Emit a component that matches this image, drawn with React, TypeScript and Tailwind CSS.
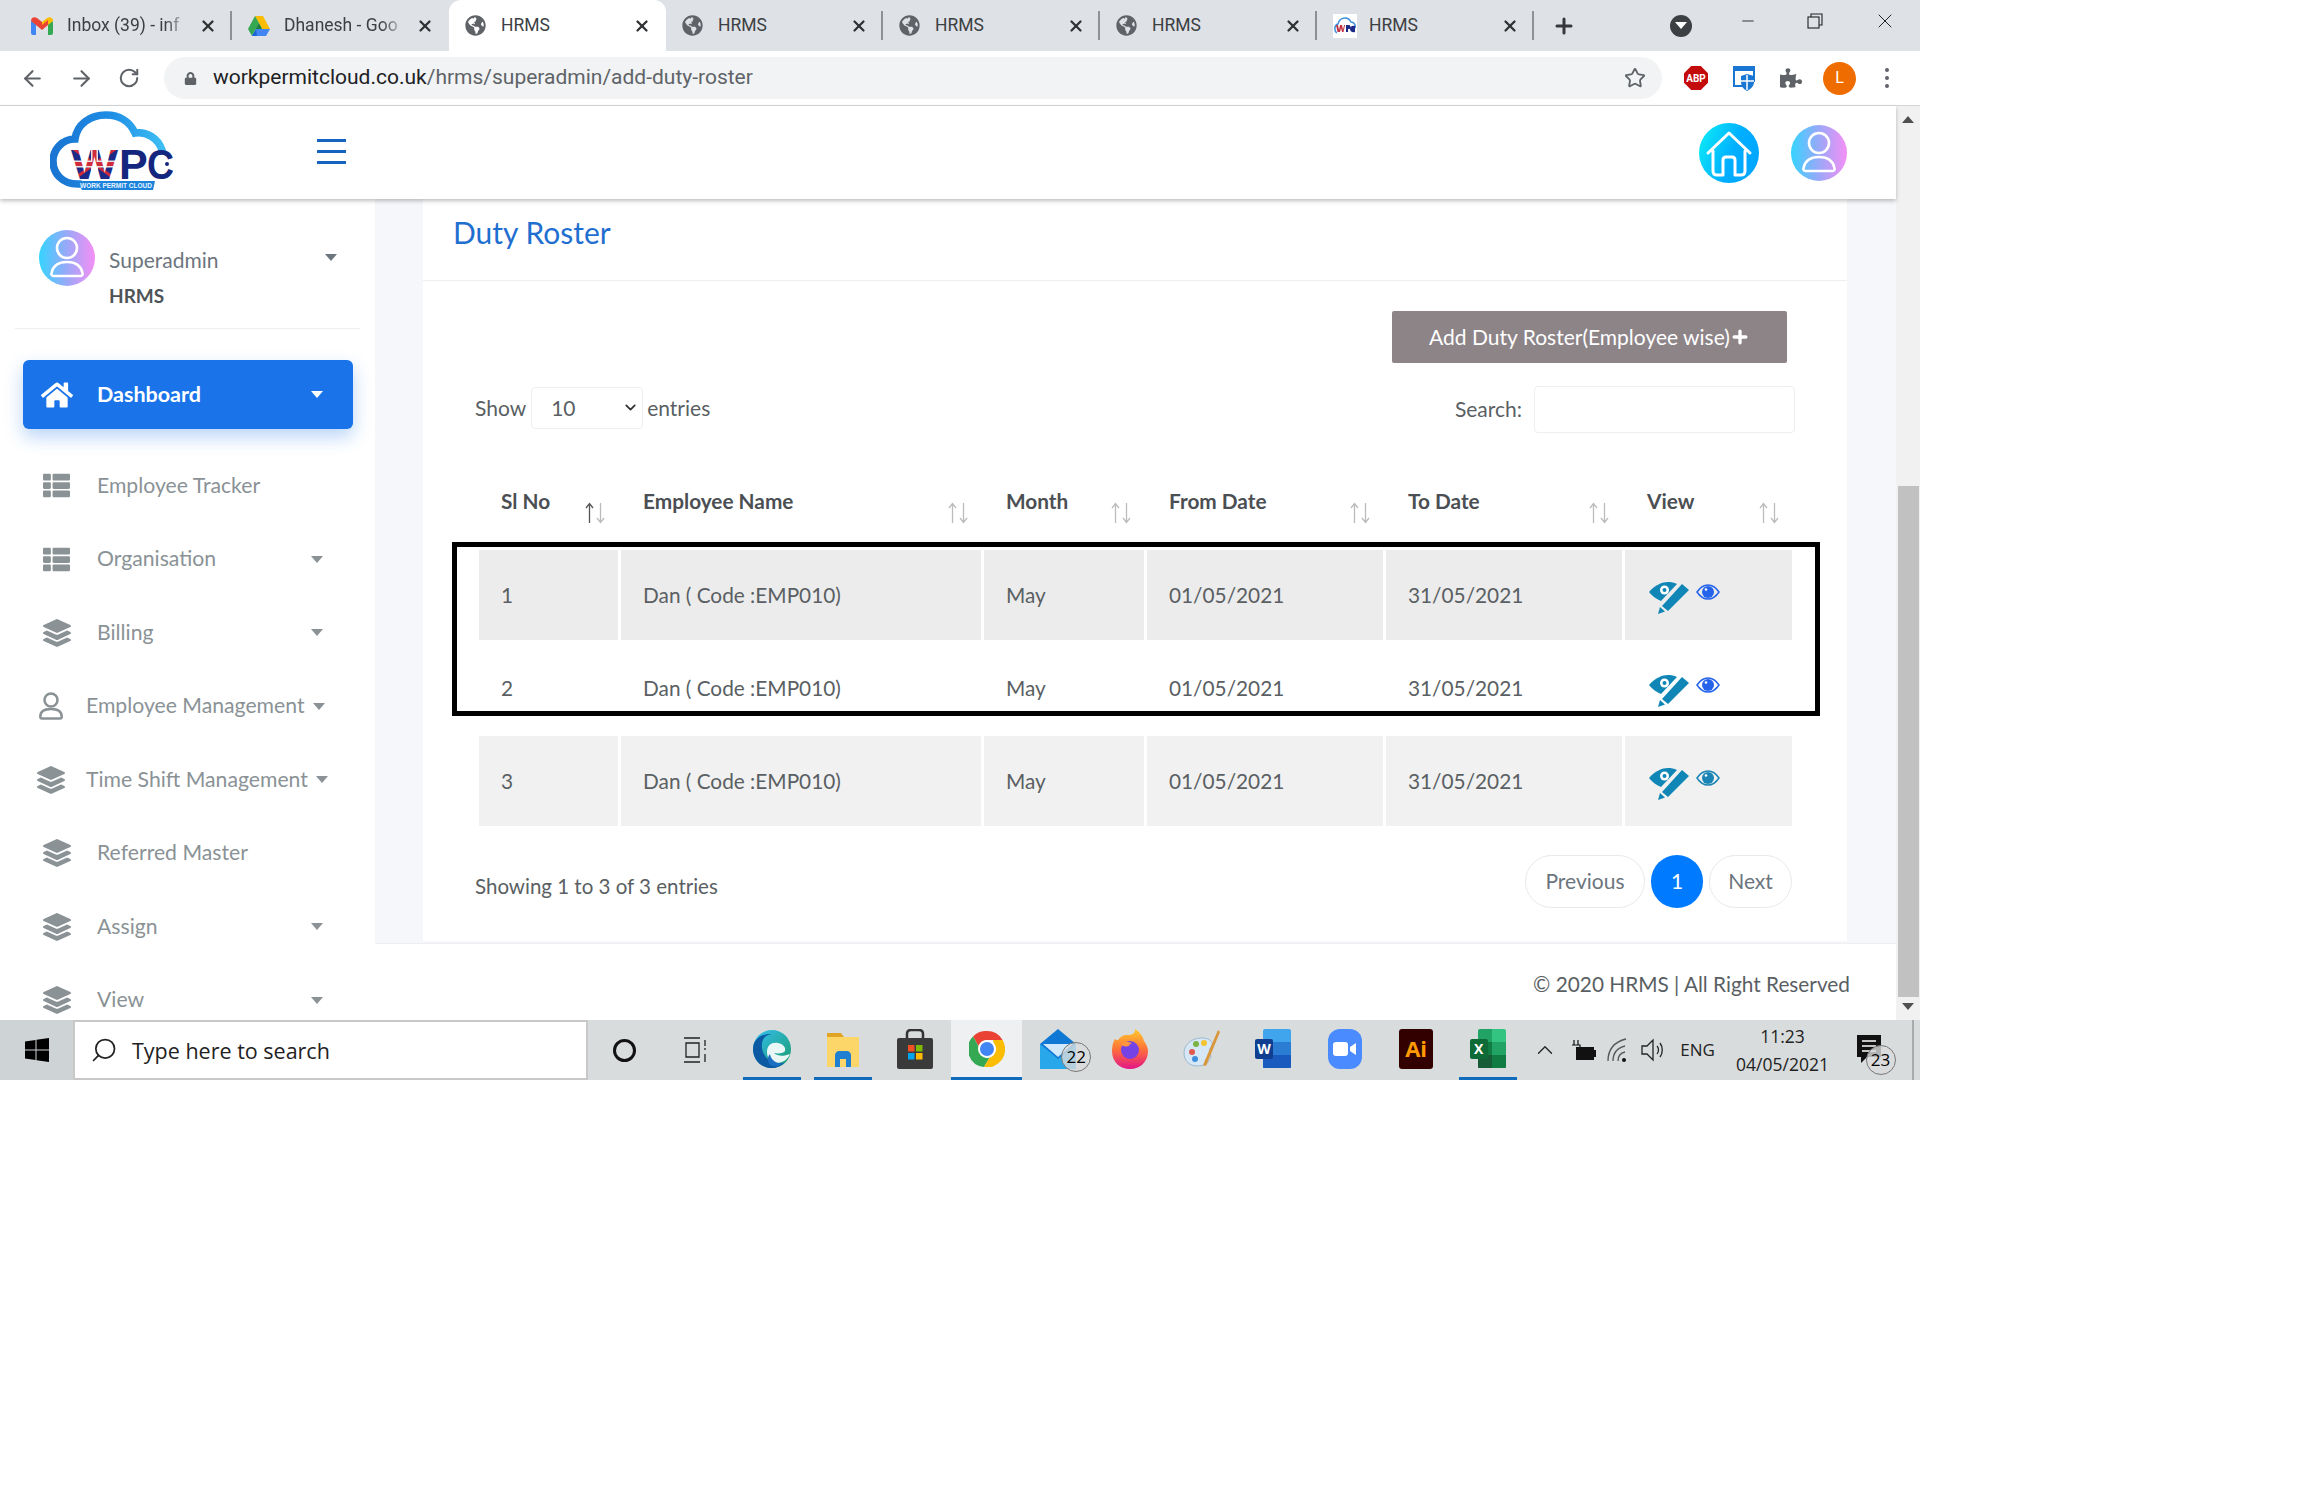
import { ReactNode } from "react";
import { FaHome, FaThList, FaLayerGroup, FaGlobeAmericas, FaPuzzlePiece, FaLock } from "react-icons/fa";
import { ArrowLeft, ArrowRight, RotateCw, X, Plus, Minus, ChevronDown, ChevronUp, Search, Star } from "lucide-react";

const lato = "[font-family:Lato,sans-serif]";

function Caret({ className = "" }: { className?: string }) {
  return <span className={`block h-0 w-0 border-x-[6.5px] border-t-[7px] border-x-transparent ${className}`} />;
}

function PersonCircle({ size }: { size: number }) {
  return (
    <svg width={size} height={size} viewBox="0 0 56 56">
      <defs>
        <linearGradient id={`pg${size}`} x1="0" x2="1" y1="0" y2="0">
          <stop offset="0" stopColor="#35d4ff" />
          <stop offset="0.5" stopColor="#9aa8f8" />
          <stop offset="1" stopColor="#f58ff5" />
        </linearGradient>
      </defs>
      <circle cx="28" cy="28" r="28" fill={`url(#pg${size})`} />
      <circle cx="28" cy="18" r="10" fill="none" stroke="#fff" strokeWidth="2.6" />
      <path d="M15 46c-2 0-3-1-2.500-3 1.500-7 7-11 15.500-11s14 4 15.500 11c.5 2-.5 3-2.500 3z" fill="none" stroke="#fff" strokeWidth="2.6" />
    </svg>
  );
}

function HomeCircle() {
  return (
    <svg width="60" height="60" viewBox="0 0 60 60">
      <defs>
        <linearGradient id="hg" x1="0" x2="1" y1="0.2" y2="0.6">
          <stop offset="0" stopColor="#0ceaf6" />
          <stop offset="0.6" stopColor="#00aeff" />
          <stop offset="1" stopColor="#00a6ff" />
        </linearGradient>
      </defs>
      <circle cx="30" cy="30" r="30" fill="url(#hg)" />
      <path d="M9 30 30 10l21 20M14 28v20c0 3 2 4 4 4h6V37c0-2 1-3 3-3h6c2 0 3 1 3 3v15h6c2 0 4-1 4-4V28" fill="none" stroke="#fff" strokeWidth="3" strokeLinecap="round" strokeLinejoin="round" />
    </svg>
  );
}

function Logo() {
  return (
    <svg width="125" height="79" viewBox="0 0 125 79" className="mb-[4px] block shrink-0">
      <defs>
        <linearGradient id="cloudStroke" x1="0" x2="1" y1="0.5" y2="0.5">
          <stop offset="0" stopColor="#1a74d2" />
          <stop offset="0.55" stopColor="#1f8fe6" />
          <stop offset="1" stopColor="#3dbdf2" />
        </linearGradient>
        <pattern id="flag" width="47" height="34" patternUnits="userSpaceOnUse" x="21" y="36">
          <rect width="47" height="34" fill="#1b2a86" />
          <path d="M0 0 47 34M47 0 0 34" stroke="#cf2b3a" strokeWidth="3" />
          <path d="M23.500 0v34M0 17h47" stroke="#e9e3e6" strokeWidth="7" />
          <path d="M23.500 0v34M0 17h47" stroke="#cf2b3a" strokeWidth="4" />
        </pattern>
      </defs>
      <path d="M30 73C11 74 3 61 3 50c0-12 10-22 22-22C27 13 40 4 56 4c14 0 24 7 29 18 11-2 23 5 27 17" fill="none" stroke="url(#cloudStroke)" strokeWidth="7.500" strokeLinecap="round" />
      <text x="21" y="68" fontFamily="Liberation Sans, sans-serif" fontWeight="700" fontSize="43" fill="url(#flag)" textLength="47" lengthAdjust="spacingAndGlyphs">W</text>
      <text x="69" y="68" fontFamily="Liberation Sans, sans-serif" fontWeight="700" fontSize="43" fill="#14267e">P</text>
      <text x="97" y="68" fontFamily="Liberation Sans, sans-serif" fontWeight="700" fontSize="43" fill="#14267e" textLength="27" lengthAdjust="spacingAndGlyphs">C</text>
      <circle cx="117" cy="53" r="2" fill="#14267e" />
      <path d="M27 70h78l-2 9H32z" fill="#1c83dc" />
      <text x="66" y="77" textAnchor="middle" fontFamily="Liberation Sans, sans-serif" fontWeight="700" fontSize="6.500" fill="#e8f4ff">WORK PERMIT CLOUD</text>
    </svg>
  );
}

function Gmail() {
  return (
    <svg width="22" height="18" viewBox="0 0 22 18">
      <path d="M0 4v12c0 1 1 2 2 2h3V7z" fill="#4285f4" />
      <path d="M22 4v12c0 1-1 2-2 2h-3V7z" fill="#34a853" />
      <path d="M5 8 0 4c0-3 3-5 6-3l5 4v5z" fill="#ea4335" />
      <path d="m17 8 5-4c0-3-3-5-6-3l-5 4v5z" fill="#fbbc04" />
      <path d="M5 3 11 8l6-5v5l-6 5-6-5z" fill="#ea4335" />
    </svg>
  );
}

function Drive() {
  return (
    <svg width="22" height="20" viewBox="0 0 22 20">
      <path d="M7 0h8l7 13h-8z" fill="#fbbc04" />
      <path d="M7 0 0 13l4 7 7-13z" fill="#34a853" />
      <path d="M4 20h14l4-7H8z" fill="#4285f4" />
      <path d="M7.500 13h6.500l-3-6z" fill="#188038" />
      <path d="M4 20h5l-1-7z" fill="#1967d2" />
    </svg>
  );
}

function Favicon() {
  return (
    <div className="flex h-[24px] w-[24px] items-center justify-center bg-white">
      <svg width="22" height="18" viewBox="0 0 22 18">
        <path d="M3 16C0 14 0 8 4 7c1-4 4-6 7-6 3 0 5 2 6 4 3 0 5 3 4 6" fill="none" stroke="#3b8fdc" strokeWidth="1.500" />
        <rect x="3" y="8" width="17" height="8" fill="#fff" />
        <path d="M2 8h2l1 5 1-5h2l1 5 1-5h1l-1.500 7h-1.500l-1-4-1 4H3.500z" fill="#c0303f" />
        <path d="M12 8h3c2 0 2 4 0 4h-1v3h-2zM21 9c-3-1-5 1-5 3s2 4 5 3" fill="#1b2a86" />
      </svg>
    </div>
  );
}

function Tab({ icon, title, active, fade, sep }: { icon: ReactNode; title: string; active?: boolean; fade?: boolean; sep?: boolean }) {
  return (
    <div className={`relative flex h-full w-[217px] shrink-0 items-center pl-[16px] text-[17.500px] text-[#3c4043] ${active ? "rounded-t-[12px] bg-white" : ""}`}>
      <span className="flex w-[36px] shrink-0 items-center">{icon}</span>
      <span className={`w-[122px] overflow-hidden whitespace-nowrap ${fade ? "[mask-image:linear-gradient(to_right,black_80%,transparent)]" : ""}`}>{title}</span>
      <X size={18} strokeWidth={3} className="absolute left-[184px] text-[#2f3133]" />
      {sep && <span className="absolute right-0 h-[29px] w-[2px] bg-[#8e9193]" />}
    </div>
  );
}

function TabStrip() {
  const globe = <FaGlobeAmericas size={21} className="text-[#5f6368]" />;
  return (
    <div className="flex h-[51px] items-center bg-[#dee1e6] pl-[15px]">
      <Tab icon={<Gmail />} title="Inbox (39) - inf" fade sep />
      <Tab icon={<Drive />} title="Dhanesh - Goo" fade />
      <Tab icon={globe} title="HRMS" active />
      <Tab icon={globe} title="HRMS" sep />
      <Tab icon={globe} title="HRMS" sep />
      <Tab icon={globe} title="HRMS" sep />
      <Tab icon={<Favicon />} title="HRMS" sep />
      <Plus size={24} strokeWidth={3} className="ml-[18px] text-[#35373a]" />
      <span className="ml-[94px] flex h-[22px] w-[22px] items-center justify-center rounded-full bg-[#3c4043]">
        <Caret className="border-t-white" />
      </span>
      <Minus size={18} strokeWidth={1.2} className="ml-[47px] mb-[10px] text-[#222]" />
      <svg width="16" height="16" viewBox="0 0 16 16" className="ml-[50px] mb-[10px]" fill="none" stroke="#222" strokeWidth="1.100">
        <rect x="1" y="4" width="11" height="11" />
        <path d="M4 4V1h11v11h-3" />
      </svg>
      <X size={24} strokeWidth={1} className="ml-[50px] mb-[10px] text-[#222]" />
    </div>
  );
}

function Toolbar() {
  return (
    <div className="flex h-[55px] items-center border-b border-[#d4d5d7] bg-white text-[#5f6368]">
      <ArrowLeft size={25} strokeWidth={2} className="ml-[20px]" />
      <ArrowRight size={25} strokeWidth={2} className="ml-[24px]" />
      <RotateCw size={22} strokeWidth={2.2} className="ml-[24px]" />
      <div className="ml-[24px] flex h-[42px] w-[1498px] items-center rounded-full bg-[#f1f3f4] pl-[20px] pr-[16px] text-[21px]">
        <FaLock size={13} className="text-[#5f6368]" />
        <span className="ml-[16px] text-[#202124]">workpermitcloud.co.uk</span>
        <span className="text-[#5f6368]">/hrms/superadmin/add-duty-roster</span>
        <Star size={22} strokeWidth={2} className="ml-auto text-[#5f6368]" />
      </div>
      <span className="ml-[22px] flex h-[24px] w-[24px] items-center justify-center bg-[#c30b0b] text-[10px] font-bold text-white [clip-path:polygon(30%_0,70%_0,100%_30%,100%_70%,70%_100%,30%_100%,0_70%,0_30%)]">ABP</span>
      <svg width="24" height="26" viewBox="0 0 24 26" className="ml-[24px]">
        <path d="M1 1h22v16h-2V6H3v14h8v2H1z" fill="#1976d2" />
        <path d="M9 11l6-2 7 2v6c0 4-3 7-7 9-4-2-6-5-6-9z" fill="#1976d2" />
        <path d="M15 10v15M9 16h13" stroke="#fff" strokeWidth="1.500" />
      </svg>
      <FaPuzzlePiece size={22} className="ml-[24px] text-[#5f6368]" />
      <span className="ml-[21px] flex h-[33px] w-[33px] items-center justify-center rounded-full bg-[#ef6c00] text-[16px] text-white">L</span>
      <span className="ml-[29px] flex flex-col gap-[4px]">
        <i className="h-[4px] w-[4px] rounded-full bg-[#5f6368]" />
        <i className="h-[4px] w-[4px] rounded-full bg-[#5f6368]" />
        <i className="h-[4px] w-[4px] rounded-full bg-[#5f6368]" />
      </span>
    </div>
  );
}

const NAV = [
  { label: "Employee Tracker", icon: "list", caret: false },
  { label: "Organisation", icon: "list", caret: true },
  { label: "Billing", icon: "layers", caret: true },
  { label: "Employee Management", icon: "user", caret: true, tight: true },
  { label: "Time Shift Management", icon: "layers", caret: true, tight: true, shifted: true },
  { label: "Referred Master", icon: "layers", caret: false },
  { label: "Assign", icon: "layers", caret: true },
  { label: "View", icon: "layers", caret: true },
];

function NavIcon({ kind, shifted }: { kind: string; shifted?: boolean }) {
  if (kind === "list") return <FaThList size={27} className="text-[#8a9296]" />;
  if (kind === "user") {
    return (
      <svg width="24" height="28" viewBox="0 0 24 28" fill="none" stroke="#8a9296" strokeWidth="2.500">
        <circle cx="12" cy="8" r="6.500" />
        <path d="M3 26.500c-1.200 0-1.700-.7-1.700-2 0-5 4-7.500 10.700-7.500s10.700 2.500 10.700 7.500c0 1.300-.5 2-1.700 2z" />
      </svg>
    );
  }
  return <FaLayerGroup size={28} className={`text-[#8a9296] ${shifted ? "-ml-[2px]" : ""}`} />;
}

function Sidebar() {
  return (
    <aside className={`h-full w-[375px] shrink-0 overflow-hidden bg-white ${lato}`}>
      <div className="relative mx-[15px] h-[130px] border-b border-[#eeeeee] pl-[24px] pt-[31px]">
        <PersonCircle size={56} />
        <div className="absolute left-[94px] top-[48px] text-[21px] leading-[26px] text-[#6c757d]">Superadmin</div>
        <div className="absolute left-[94px] top-[85px] text-[19px] font-bold leading-[24px] text-[#4f5459]">HRMS</div>
        <Caret className="absolute left-[310px] top-[55px] border-t-[#6c757d]" />
      </div>
      <div className="mx-[23px] mt-[31px] flex h-[69px] w-[330px] items-center rounded-[6px] bg-[#1a73e8] pl-[18px] pr-[30px] text-white shadow-[0_8px_18px_rgba(26,115,232,0.3)]">
        <FaHome size={32} />
        <span className="mb-[1px] ml-[24px] text-[21.500px] font-bold">Dashboard</span>
        <Caret className="ml-auto border-t-white" />
      </div>
      <nav className="mt-[20px] flex flex-col">
        {NAV.map((n) => (
          <div key={n.label} className="flex h-[73.500px] shrink-0 items-center text-[21.200px] text-[#8a9296]">
            <span className={`flex shrink-0 items-center ${n.tight ? "w-[86px] pl-[39px]" : "w-[97px] pl-[43px]"}`}>
              <NavIcon kind={n.icon} shifted={n.shifted} />
            </span>
            <span className="whitespace-nowrap">{n.label}</span>
            {n.caret && <Caret className={`border-t-[#8a9296] ${n.tight ? "ml-[8px]" : "ml-auto mr-[52px]"}`} />}
          </div>
        ))}
      </nav>
    </aside>
  );
}

function SortArrows({ dark }: { dark?: boolean }) {
  return (
    <svg width="22" height="22" viewBox="0 0 22 22" fill="none" strokeWidth="1.300" className="mt-[16px] shrink-0">
      <path d="M5.500 21V2M2 6l3.500-4.500L9 6" stroke={dark ? "#555" : "#bbb"} />
      <path d="M16.500 1v19M13 16l3.500 4.500L20 16" stroke="#bbb" />
    </svg>
  );
}

function PenEye() {
  return (
    <svg width="40" height="32" viewBox="0 0 40 32">
      <path d="M0 10C6 3 13 0 19 0c3 0 6 .6 9 2L12 19C7 17 3 14 0 10z" fill="#0f86b5" />
      <circle cx="15.500" cy="8" r="4.500" fill="#fff" />
      <circle cx="15.500" cy="8" r="2" fill="#0f86b5" />
      <path d="M13 24 33 2l7 6-21 21z" fill="#0f86b5" />
      <path d="M9 32l2-7 5 4.500z" fill="#0f86b5" />
    </svg>
  );
}

function ViewEye({ color }: { color: string }) {
  return (
    <svg width="24" height="16" viewBox="0 0 24 16">
      <path d="M1 8c3-4.500 7-7 11-7s8 2.500 11 7c-3 4.500-7 7-11 7S4 12.500 1 8z" fill="none" stroke={color} strokeWidth="1.500" />
      <circle cx="12" cy="8" r="6" fill={color} />
      <circle cx="10" cy="5.500" r="1.300" fill="#fff" />
    </svg>
  );
}

const COLS = [
  { label: "Sl No", w: "w-[139px]" },
  { label: "Employee Name", w: "w-[360px]" },
  { label: "Month", w: "w-[160px]" },
  { label: "From Date", w: "w-[236px]" },
  { label: "To Date", w: "w-[236px]" },
  { label: "View", w: "w-[167px]" },
];

const ROWS = [
  { n: 1, bg: "bg-[#ececec]", eye: "#2563eb" },
  { n: 2, bg: "bg-white", eye: "#2563eb" },
  { n: 3, bg: "bg-[#f1f1f1]", eye: "#1a85b5" },
];

function RosterTable() {
  return (
    <div className="relative ml-[53px] mt-[40px] w-[1319px]">
      <table className="w-[1319px] table-fixed border-separate border-spacing-[3px] text-[20.800px] text-[#5a5f63]">
        <thead>
          <tr>
            {COLS.map((c, i) => (
              <th key={c.label} className={`${c.w} h-[73px] p-0 text-left align-top font-bold text-[#4b4f53]`}>
                <div className="flex justify-between pl-[22px] pr-[12px] pt-[12px] text-[20.800px] leading-[30px]">
                  <span>{c.label}</span>
                  <SortArrows dark={i === 0} />
                </div>
              </th>
            ))}
          </tr>
        </thead>
        <tbody>
          {ROWS.map((r) => (
            <tr key={r.n}>
              <td className={`${r.bg} h-[90px] pl-[22px]`}>{r.n}</td>
              <td className={`${r.bg} pl-[22px]`}>Dan ( Code :EMP010)</td>
              <td className={`${r.bg} pl-[22px]`}>May</td>
              <td className={`${r.bg} pl-[22px]`}>01/05/2021</td>
              <td className={`${r.bg} pl-[22px]`}>31/05/2021</td>
              <td className={`${r.bg} pl-[24px]`}>
                <div className="flex items-start gap-[7px] pt-[5px]">
                  <PenEye />
                  <span className="mt-[2px]"><ViewEye color={r.eye} /></span>
                </div>
              </td>
            </tr>
          ))}
        </tbody>
      </table>
      {/* black highlight box drawn over rows 1-2 */}
      <div className="pointer-events-none absolute left-[-24px] top-[71px] h-[174px] w-[1368px] border-[5px] border-black" />
    </div>
  );
}

function Card() {
  return (
    <section className="h-[742px] w-[1424px] bg-white">
      <div className="flex h-[82px] items-start border-b border-[#eeeeee] pl-[30px] pt-[12px]">
        <h1 className="text-[30px] leading-[42px] text-[#1f6fd0]">Duty Roster</h1>
      </div>
      <div className="flex justify-end pr-[60px] pt-[30px]">
        <button className="flex h-[52px] w-[395px] items-center justify-center rounded-[2px] bg-[#8d8488] text-[21px] text-white">
          Add Duty Roster(Employee wise)
          <Plus size={20} strokeWidth={4} />
        </button>
      </div>
      <div className="mt-[21px] flex h-[47px] items-center pl-[52px] pr-[52px] text-[21px] text-[#5a5f63]">
        <span>Show</span>
        <span className="relative ml-[5px] mr-[4px] block">
          <select defaultValue="10" className="block h-[42px] w-[112px] appearance-none rounded-[4px] border border-[#eeeeee] bg-white pl-[19px] text-[21px] text-[#5a5f63]">
            <option value="10">10</option>
            <option value="25">25</option>
          </select>
          <ChevronDown size={17} strokeWidth={2.5} className="pointer-events-none absolute right-[4px] top-[12px] text-[#333]" />
        </span>
        <span>entries</span>
        <span className="ml-auto mr-[2px] mt-[2px]">Search:</span>
        <input className="ml-[10px] mt-[4px] h-[47px] w-[261px] rounded-[4px] border border-[#eeeeee] bg-white" />
      </div>
      <RosterTable />
      <div className="mt-[26px] flex items-center justify-between pl-[52px] pr-[55px] text-[21px] text-[#5a5f63]">
        <span className="pt-[10px] text-[20.500px]">Showing 1 to 3 of 3 entries</span>
        <div className="flex items-center gap-[6px]">
          <span className="flex h-[53px] w-[120px] items-center justify-center rounded-full border border-[#e9e9e9] pb-[1px] text-[#6c757d]">Previous</span>
          <span className="flex h-[53px] w-[52px] items-center justify-center rounded-full bg-[#007bff] pb-[1px] text-white">1</span>
          <span className="flex h-[53px] w-[83px] items-center justify-center rounded-full border border-[#e9e9e9] pb-[1px] text-[#6c757d]">Next</span>
        </div>
      </div>
    </section>
  );
}

function EdgeIcon() {
  return (
    <svg width="38" height="38" viewBox="0 0 38 38">
      <defs>
        <linearGradient id="eg" x1="0" x2="1" y1="0" y2="1">
          <stop offset="0" stopColor="#35c1f1" />
          <stop offset="1" stopColor="#1a9a6c" />
        </linearGradient>
      </defs>
      <circle cx="19" cy="19" r="19" fill="url(#eg)" />
      <path d="M0 19C0 9 9 3 19 4c-8 1-11 7-10 14 1 10 12 19 23 14-4 4-8 6-13 6C8 38 0 30 0 19z" fill="#0c59a4" />
      <path d="M14 22c0-7 5-10 11-9 5 1 8 4 7 8-1 2-6 3-11 2 3 3 9 4 16 1-2 5-7 9-13 9-6 0-10-5-10-11z" fill="#fff" opacity="0.9" />
      <path d="M17 24c1 6 6 10 13 9-3 3-7 4-11 3-5-2-5-9-2-12z" fill="#1b6fc2" />
    </svg>
  );
}

function ExplorerIcon() {
  return (
    <svg width="32" height="36" viewBox="0 0 32 36">
      <path d="M0 2h14l3 4H0z" fill="#e0a526" />
      <rect y="6" width="32" height="30" fill="#fcd669" />
      <path d="M8 36V24c0-2 2-4 4-4h8c2 0 4 2 4 4v12h-5v-8h-6v8z" fill="#1f7fd0" />
    </svg>
  );
}

function StoreIcon() {
  return (
    <svg width="36" height="40" viewBox="0 0 36 40">
      <path d="M10 10V5c0-3 2-4 4-4h8c2 0 4 1 4 4v5" fill="none" stroke="#333" strokeWidth="2.500" />
      <rect y="9" width="36" height="31" rx="2" fill="#3a3a3a" />
      <rect x="11" y="16" width="6.500" height="6.500" fill="#f25022" />
      <rect x="19" y="16" width="6.500" height="6.500" fill="#7fba00" />
      <rect x="11" y="24" width="6.500" height="6.500" fill="#00a4ef" />
      <rect x="19" y="24" width="6.500" height="6.500" fill="#ffb900" />
    </svg>
  );
}

function ChromeIcon() {
  return (
    <svg width="36" height="36" viewBox="0 0 36 36">
      <path d="M18 0a18 18 0 0 1 15.600 9H18a9 9 0 0 0-8.500 6L4 5.500A18 18 0 0 1 18 0z" fill="#ea4335" />
      <path d="M4 5.500 10 16a9 9 0 0 0 10.500 10.600L15 36A18 18 0 0 1 4 5.500z" fill="#34a853" />
      <path d="M33.600 9A18 18 0 0 1 15 36l5.500-9.400A9 9 0 0 0 25 12.500L24 9z" fill="#fbbc04" />
      <circle cx="18" cy="18" r="8" fill="#4285f4" stroke="#fff" strokeWidth="2" />
    </svg>
  );
}

function MailIcon() {
  return (
    <div className="relative">
      <svg width="36" height="40" viewBox="0 0 36 40">
        <path d="M18 0 36 15v25H0V15z" fill="#0f78d4" />
        <path d="M3 15h30L18 28z" fill="#cfe9fb" />
        <path d="M0 15 18 30l18-15v25H0z" fill="#28a8ea" />
      </svg>
      <span className="absolute -bottom-[3px] -right-[15px] flex h-[30px] w-[30px] items-center justify-center rounded-full border border-[#777] bg-[#d8dbdc]/80 text-[17px] text-black">22</span>
    </div>
  );
}

function FirefoxIcon() {
  return (
    <svg width="36" height="40" viewBox="0 0 36 40">
      <defs>
        <linearGradient id="ff" x1="0.5" x2="0.5" y1="0" y2="1">
          <stop offset="0" stopColor="#ffcb2d" />
          <stop offset="0.5" stopColor="#ff7139" />
          <stop offset="1" stopColor="#e31587" />
        </linearGradient>
      </defs>
      <path d="M3 10c1 1 2 1 3 1 2-3 5-5 8-5 3 0 6 0 8-2 1-1 1-3 1-4 5 3 8 8 9 12 3 4 4 8 4 10 0 11-8 18-18 18S0 33 0 22c0-5 1-9 3-12z" fill="url(#ff)" />
      <circle cx="18" cy="21" r="9" fill="#7542e5" />
      <path d="M9 15c4-3 8-2 11-1-2 1-3 2-3 3-4 1-7 0-8-2z" fill="#ff9640" />
    </svg>
  );
}

function PaintIcon() {
  return (
    <svg width="38" height="40" viewBox="0 0 38 40">
      <path d="M2 24C2 14 12 8 22 9c7 1 10 5 7 9-3 3-1 6 0 9-1 7-7 10-14 10S2 32 2 24z" fill="#d6e7f5" stroke="#9db9d0" />
      <circle cx="10" cy="23" r="3" fill="#e05a4e" />
      <circle cx="14" cy="15" r="3" fill="#7cb342" />
      <circle cx="22" cy="14" r="3" fill="#f4c430" />
      <circle cx="13" cy="30" r="3" fill="#3f8fdc" />
      <path d="M36 1 21 36l3 1L38 3z" fill="#d9963a" />
    </svg>
  );
}

function WordIcon() {
  return (
    <div className="relative h-[40px] w-[36px]">
      <div className="absolute right-0 top-0 flex h-[40px] w-[28px] flex-col overflow-hidden rounded-[2px]">
        <i className="h-1/3 bg-[#41a5ee]" />
        <i className="h-1/3 bg-[#2b7cd3]" />
        <i className="h-1/3 bg-[#185abd]" />
      </div>
      <span className="absolute left-0 top-[10px] flex h-[20px] w-[18px] items-center justify-center rounded-[2px] bg-[#103f91] text-[14px] font-bold text-white">W</span>
    </div>
  );
}

function ZoomIcon() {
  return (
    <div className="flex h-[40px] w-[34px] items-center justify-center rounded-[12px] bg-[#4a8cff]">
      <svg width="24" height="16" viewBox="0 0 24 16">
        <rect y="1" width="15" height="14" rx="3" fill="#fff" />
        <path d="m17 6 6-4v12l-6-4z" fill="#fff" />
      </svg>
    </div>
  );
}

function AiIcon() {
  return <div className="flex h-[40px] w-[34px] items-center justify-center rounded-[3px] bg-[#330000] text-[22px] font-bold text-[#ff9a00]">Ai</div>;
}

function ExcelIcon() {
  return (
    <div className="relative h-[40px] w-[36px]">
      <div className="absolute right-0 top-0 grid h-[40px] w-[28px] grid-cols-2 grid-rows-3 overflow-hidden rounded-[2px]">
        <i className="bg-[#21a366]" />
        <i className="bg-[#33c481]" />
        <i className="bg-[#107c41]" />
        <i className="bg-[#21a366]" />
        <i className="bg-[#185c37]" />
        <i className="bg-[#107c41]" />
      </div>
      <span className="absolute left-0 top-[10px] flex h-[20px] w-[18px] items-center justify-center rounded-[2px] bg-[#0e6b37] text-[14px] font-bold text-white">X</span>
    </div>
  );
}

function Slot({ children, on, light }: { children: ReactNode; on?: boolean; light?: boolean }) {
  return (
    <div className={`flex h-full w-[71.600px] shrink-0 justify-center ${light ? "bg-[#eef0f1]" : ""}`}>
      <div className={`flex h-full items-center justify-center border-b-[3px] ${light ? "w-full" : "w-[58px]"} ${on ? "border-[#0f6cbd]" : "border-transparent"}`}>
        {children}
      </div>
    </div>
  );
}

function Taskbar() {
  return (
    <footer className="flex h-[60px] items-stretch bg-[#d9dcdc] [font-family:'Open_Sans',sans-serif]">
      <div className="flex w-[73px] shrink-0 items-center justify-center bg-[#ced3d5]">
        <svg width="24" height="24" viewBox="0 0 24 24" fill="#000">
          <path d="M0 3.500 10.500 2v9.500H0zM11.500 1.800 24 0v11.500H11.500zM0 12.500h10.500V22L0 20.500zM11.500 12.500H24V24l-12.500-1.800z" />
        </svg>
      </div>
      <div className="flex w-[515px] shrink-0 items-center border-2 border-[#c8c8c8] bg-white pl-[15px] text-[21.500px] text-[#222]">
        <Search size={28} strokeWidth={1.5} className="-scale-x-100" />
        <span className="ml-[14px] mt-[2px]">Type here to search</span>
      </div>
      <div className="flex w-[72px] items-center justify-center">
        <span className="h-[23px] w-[23px] rounded-full border-[3px] border-[#111]" />
      </div>
      <div className="flex w-[72px] items-center justify-center">
        <svg width="26" height="26" viewBox="0 0 26 26" fill="none" stroke="#222" strokeWidth="1.300">
          <path d="M1 1h16M1 25h16M3 6h13v14H3zM22 3v6M22 11v2M22 17v8" />
        </svg>
      </div>
      <div className="ml-[4px] flex">
        <Slot on><EdgeIcon /></Slot>
        <Slot on><ExplorerIcon /></Slot>
        <Slot><StoreIcon /></Slot>
        <Slot on light><ChromeIcon /></Slot>
        <Slot><MailIcon /></Slot>
        <Slot><FirefoxIcon /></Slot>
        <Slot><PaintIcon /></Slot>
        <Slot><WordIcon /></Slot>
        <Slot><ZoomIcon /></Slot>
        <Slot><AiIcon /></Slot>
        <Slot on><ExcelIcon /></Slot>
      </div>
      <div className="flex flex-1 items-center text-[#222]">
        <span className="flex w-[42px] justify-center"><ChevronUp size={26} strokeWidth={1.2} /></span>
        <span className="flex w-[34px] justify-center">
          <svg width="26" height="22" viewBox="0 0 26 22">
            <path d="M4 1v5M8 1v5M2 6h8v4H7v2" fill="none" stroke="#111" strokeWidth="1.200" />
            <rect x="6" y="8" width="18" height="13" fill="#111" />
            <rect x="24" y="11" width="2" height="7" fill="#111" />
          </svg>
        </span>
        <span className="flex w-[36px] justify-center">
          <svg width="24" height="26" viewBox="0 0 24 26" fill="none" stroke="#555" strokeWidth="1.300">
            <path d="M2 24C2 12 8 5 20 2M7 24c0-8 4-13 12-15M12 24c0-5 2-8 7-9" />
            <circle cx="18" cy="23" r="2" fill="#111" stroke="none" />
          </svg>
        </span>
        <span className="flex w-[34px] justify-center">
          <svg width="26" height="26" viewBox="0 0 26 26" fill="none" stroke="#222" strokeWidth="1.300">
            <path d="M2 9h5l6-6v20l-6-6H2zM17 9c2 2 2 6 0 8M20 6c3 4 3 10 0 14" />
          </svg>
        </span>
        <span className="w-[56px] text-center text-[17px]">ENG</span>
        <div className="flex w-[114px] flex-col items-center text-[17.500px] leading-[28px]">
          <span>11:23</span>
          <span>04/05/2021</span>
        </div>
        <span className="relative ml-[17px] block h-[30px] w-[24px]">
          <svg width="24" height="30" viewBox="0 0 24 30" className="absolute left-0 top-0">
            <path d="M0 0h24v22H10l-6 6v-6H0z" fill="#111" />
            <path d="M5 6h14M5 11h14M5 16h14" stroke="#fff" strokeWidth="1.500" />
          </svg>
          <span className="absolute left-[9px] top-[10px] flex h-[30px] w-[30px] items-center justify-center rounded-full border border-[#777] bg-[#d8dbdc]/80 text-[17px] text-black">23</span>
        </span>
        <span className="ml-[31px] h-full w-[2px] bg-[#a8abac]" />
      </div>
    </footer>
  );
}

function Scrollbar() {
  return (
    <div className="flex w-[24px] shrink-0 flex-col items-center bg-[#f1f1f1]">
      <span className="mt-[10px] block h-0 w-0 border-x-[6px] border-b-[7px] border-x-transparent border-b-[#505050]" />
      <span className="mt-[363px] block h-[511px] w-[21px] bg-[#c1c1c1]" />
      <span className="mt-[6px] block h-0 w-0 border-x-[6px] border-t-[7px] border-x-transparent border-t-[#505050]" />
    </div>
  );
}

export default function App() {
  return (
    <div className="h-[1494px] w-[2298px] overflow-hidden bg-white [font-family:Roboto,sans-serif]">
      <div className="flex h-[1080px] w-[1920px] flex-col">
        <TabStrip />
        <Toolbar />
        <div className="flex h-[914px]">
          <div className="flex min-w-0 flex-1 flex-col">
            <header className="relative z-10 flex h-[93px] shrink-0 items-center bg-white pl-[50px] pr-[49px] shadow-[0_2px_4px_rgba(0,0,0,0.25)]">
              <Logo />
              <div className="mb-[3px] ml-[142px] flex w-[29px] flex-col gap-[8px]">
                <i className="h-[3px] bg-[#1565c0]" />
                <i className="h-[3px] bg-[#1565c0]" />
                <i className="h-[3px] bg-[#1565c0]" />
              </div>
              <div className="ml-auto flex items-center gap-[32px]">
                <HomeCircle />
                <PersonCircle size={56} />
              </div>
            </header>
            <div className="flex min-h-0 flex-1">
              <Sidebar />
              <main className={`flex flex-1 flex-col bg-[#f6f7fb] ${lato}`}>
                <div className="pl-[48px]">
                  <Card />
                </div>
                <div className="mt-[2px] flex flex-1 items-center justify-end border-t border-[#eeeeee] bg-white pr-[46px] pt-[3px] text-[20.800px] text-[#5a5f63]">
                  © 2020 HRMS | All Right Reserved
                </div>
              </main>
            </div>
          </div>
          <Scrollbar />
        </div>
        <Taskbar />
      </div>
    </div>
  );
}
